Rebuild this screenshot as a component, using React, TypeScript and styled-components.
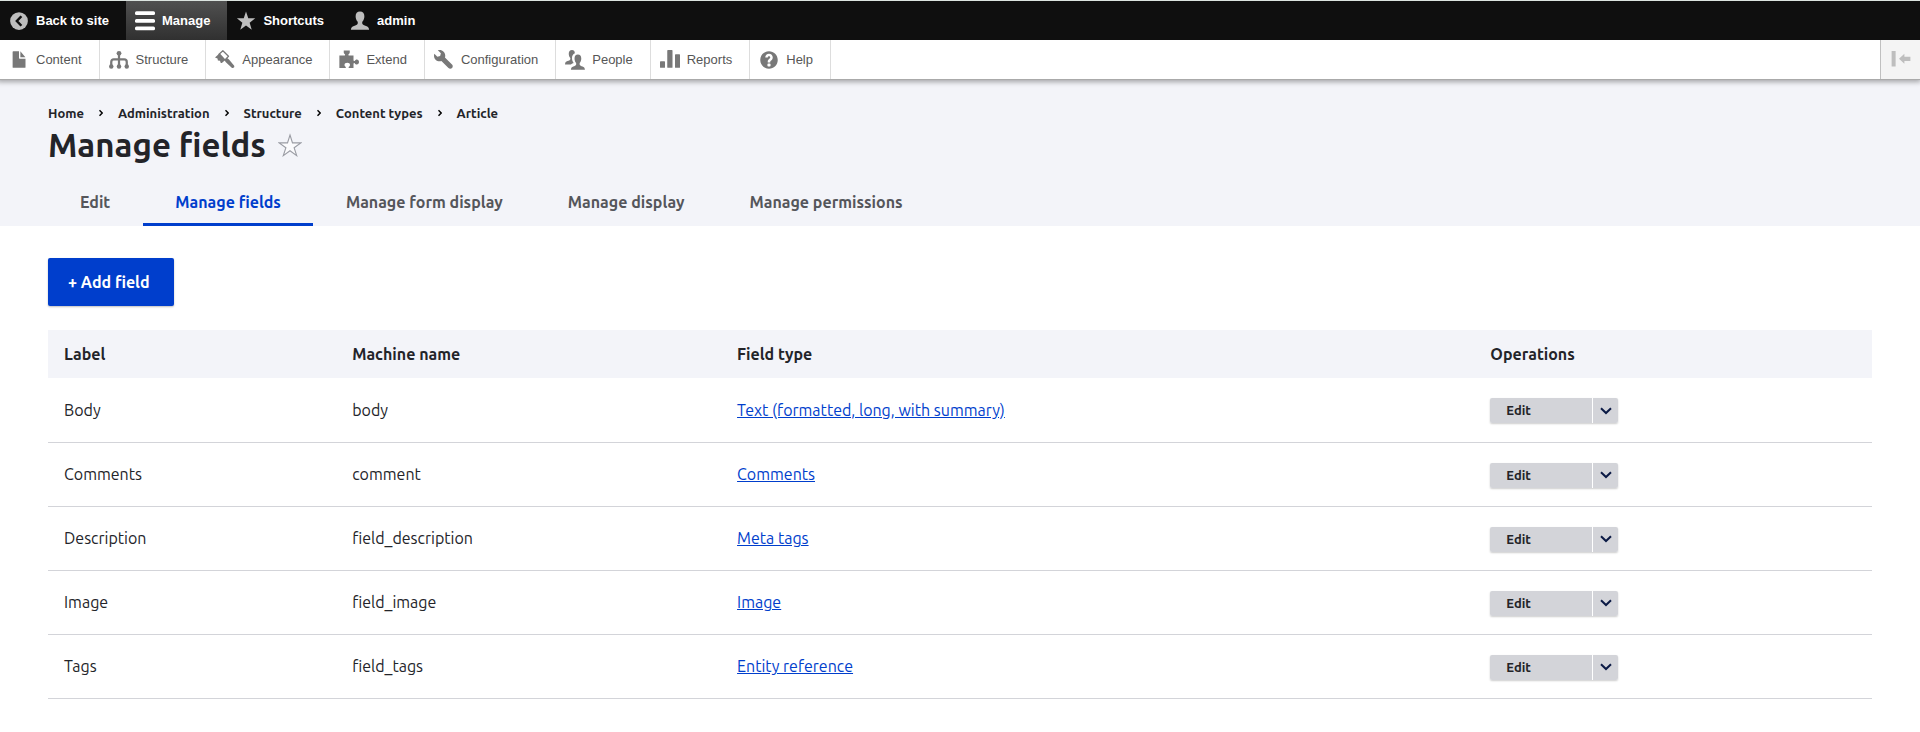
import React from "react";
import styled, { createGlobalStyle, css } from "styled-components";

const uiFont = `Ubuntu, "Noto Sans", sans-serif`;
const toolbarFont = `"Liberation Sans", Arial, sans-serif`;

const GlobalStyle = createGlobalStyle`
  *, *::before, *::after { box-sizing: border-box; }
  body {
    margin: 0;
    background: #fff;
    color: #232429;
    font-family: ${uiFont};
    font-size: 16px;
    line-height: 24px;
  }
`;

/* ---------- toolbar ---------- */

const ToolbarBar = styled.nav`
  display: flex;
  height: 40px;
  border-top: 1px solid #dbe3df;
  background: #0f0f0f;
  font: bold 13px/39px ${toolbarFont};
`;

const itemLayout = css`
  display: flex;
  align-items: center;
  gap: 7px;
  padding: 0 17px 0 9px;
  text-decoration: none;
  white-space: nowrap;
`;

const BarLink = styled.a<{ $active?: boolean }>`
  ${itemLayout}
  color: #fff;
  background: ${(p) => (p.$active ? "linear-gradient(#505050, #303030)" : "transparent")};
  svg { color: ${(p) => (p.$active ? "#fff" : "#bebebe")}; }
`;

const Tray = styled.nav`
  position: relative;
  display: flex;
  height: 40px;
  background: #fff;
  border-bottom: 1px solid #aaa;
  box-shadow: -1px 0 5px 2px rgba(0, 0, 0, 0.33);
  clip-path: inset(0 0 -12px 0);
  font: 13px/39px ${toolbarFont};
`;

const TrayLink = styled.a`
  ${itemLayout}
  color: #565656;
  border-right: 1px solid #ddd;
  svg { color: #787878; }
`;

const OrientationButton = styled.button`
  display: flex;
  align-items: center;
  justify-content: center;
  width: 40px;
  margin-left: auto;
  padding: 0;
  border: 0;
  border-left: 1px solid #c0c0c0;
  background: #f4f4f4;
  color: #bebebe;
`;

const Glyph = styled.svg`
  display: block;
  flex: none;
  width: 20px;
  height: 20px;
  fill: currentColor;
`;

const Icon = ({ children }: { children: React.ReactNode }) => (
  <Glyph viewBox="0 0 16 16" aria-hidden="true">
    {children}
  </Glyph>
);

const personPath =
  "M7.3 0C5 0 3.8 1.5 3.8 3.8c0 1.500.5 3.200 1.500 4.200.3.4.3 1.300.1 1.900-.3.900-1.500 1.300-2.900 1.700C1 12 .2 12.800 0 14.700h14.600c-.2-1.900-1-2.700-2.500-3.100-1.400-.4-2.600-.8-2.900-1.700-.2-.6-.2-1.500.1-1.900 1-1 1.500-2.700 1.500-4.200C10.800 1.500 9.600 0 7.300 0z";

const BackIcon = () => (
  <Icon>
    <circle cx="8" cy="8" r="7.1" />
    <path d="M9.900 4.200 6.300 8l3.600 3.800" fill="none" stroke="#0f0f0f" strokeWidth="2" />
  </Icon>
);
const MenuIcon = () => (
  <Icon>
    <rect y="0.200" width="16" height="3" rx="1.200" />
    <rect y="6.300" width="16" height="3" rx="1.200" />
    <rect y="12.300" width="16" height="3" rx="1.200" />
  </Icon>
);
const StarIcon = () => (
  <Icon>
    <path d="M8 .4l1.800 5.400h5.600l-4.500 3.500 1.700 5.600L8 11.500l-4.600 3.400 1.700-5.600L.7 5.800h5.500z" />
  </Icon>
);
const PersonIcon = () => (
  <Icon>
    <path d={personPath} transform="translate(.7 .3)" />
  </Icon>
);
const FileIcon = () => (
  <Icon>
    <path d="M8 1H3.400a.5.5 0 0 0-.5.5v12.200c0 .3.200.5.500.5h9.300c.3 0 .5-.2.500-.5V7H8.600A.6.600 0 0 1 8 6.400zM9.100 1v4.800h4z" />
  </Icon>
);
const SitemapIcon = () => (
  <Icon>
    <circle cx="8" cy="2.600" r="1.900" />
    <circle cx="1.800" cy="13.200" r="1.800" />
    <circle cx="8" cy="13.200" r="1.800" />
    <circle cx="14.200" cy="13.200" r="1.800" />
    <path d="M8 3v10M1.800 13V9.500c0-1.300.7-2 2-2h8.400c1.300 0 2 .7 2 2V13" fill="none" stroke="currentColor" strokeWidth="1.800" />
  </Icon>
);
const BrushIcon = () => (
  <Icon>
    <path d="M3.200 3.400 6.300.6 10.800 5 7.900 8.100z" fill="none" stroke="currentColor" strokeWidth="1" strokeLinejoin="round" />
    <path d="M3.700 2.500 0 6l2 .7.3 1.600 1.700.3.600 1.800.9-.1L8.400 7.700zM9.400 6.200l1.800 1.300 4 4.800c.4.600.3 1.300-.1 1.700s-1.100.500-1.700.1l-4.700-4.300L7.400 8z" />
  </Icon>
);
const PuzzleIcon = () => (
  <Icon>
    <path d="M.3 4.400h3.900c.7 0 .9-.5.5-1-.5-.4-.9-.8-.9-1.600V.3h4.800v1.500c0 .8-.4 1.200-.9 1.600-.4.500-.2 1 .5 1h3.400v3.700c0 .7.600.8 1.100.4.400-.4.700-.9 1.500-.9 1.100 0 1.800.8 1.800 2s-.7 2-1.800 2c-.8 0-1.100-.5-1.500-.9-.5-.4-1.100-.3-1.100.4v3.300H8.300c-.7 0-.8-.6-.4-1 .5-.4.900-.8.900-1.500 0-1-.8-1.700-2.200-1.700s-2.200.7-2.200 1.700c0 .7.400 1.100.9 1.500.4.400.3 1-.4 1H.3v-3.200V4.400z" />
  </Icon>
);
const WrenchIcon = () => (
  <Icon>
    <path d="M14.416 11.586l-.01-.008v-.001l-5.656-5.656c.15-.449.252-.921.252-1.421 0-2.485-2.016-4.500-4.502-4.500-.505 0-.981.102-1.434.255l2.431 2.431-.588 2.196-2.196.588-2.445-2.445c-.162.464-.268.956-.268 1.475 0 2.486 2.014 4.500 4.500 4.500.5 0 .972-.102 1.421-.251l5.667 5.665c.781.781 2.047.781 2.828 0s.781-2.047 0-2.828z" />
  </Icon>
);
const PeopleIcon = () => (
  <Icon>
    <path d="M5.600 0C3.900 0 3 1.200 3 2.900c0 1.200.4 2.400 1.100 3.200.3.300.200 1 .1 1.400-.3.700-1.100 1-2.200 1.300C.8 9.100.100 9.900 0 11.600h4.700c.6-.6 1.500-.9 2.300-1.200-.9-1.100-1.400-2.500-1.400-4C5.600 4.600 6.300 3.200 7.900 2.500 7.800.9 7 0 5.600 0z" />
    <path d={personPath} transform="translate(4.700 3.600) scale(.77 .83)" />
  </Icon>
);
const ChartIcon = () => (
  <Icon>
    <rect y="9" width="4" height="5.200" rx=".5" />
    <rect x="5.800" y="0" width="4.200" height="14.200" rx=".5" />
    <rect x="12" y="3.300" width="4" height="10.900" rx=".5" />
  </Icon>
);
const HelpIcon = () => (
  <Icon>
    <path d="M8.002 1c-3.868 0-7.002 3.134-7.002 7s3.134 7 7.002 7c3.865 0 7-3.134 7-7s-3.135-7-7-7zm3 5c0 .551-.16 1.085-.477 1.586l-.158.22c-.07.093-.189.241-.361.393-.168.148-.35.299-.545.447l-.203.189-.141.129-.096.17-.021.235v.63h-2.001v-.704c.026-.396.078-.73.204-.999.125-.269.271-.498.439-.688l.225-.21-.01-.015.176-.14.137-.128c.186-.139.357-.277.516-.417l.148-.18c.098-.152.168-.323.168-.518 0-.552-.447-1-1-1s-1.002.448-1.002 1h-2c0-1.657 1.343-3 3.002-3 1.656 0 3 1.343 3 3zm-1.750 6.619c0 .344-.281.625-.625.625h-1.250c-.345 0-.626-.281-.626-.625v-1.238c0-.344.281-.625.626-.625h1.250c.344 0 .625.281.625.625v1.238z" />
  </Icon>
);
const OrientationIcon = () => (
  <Icon>
    <path d="M.5.800h3.200v12.400H.5zM6.400 7 10.700 3v2.400h4.800v3.400h-4.800V11z" />
  </Icon>
);

/* ---------- page header ---------- */

const PageHeader = styled.header`
  padding: 24px 48px 0;
  background: #f3f4f9;
`;

const Breadcrumb = styled.ol`
  display: flex;
  margin: 0;
  padding: 0;
  list-style: none;
  font-size: 13px;
  font-weight: 700;
  line-height: 18px;
  a { color: inherit; text-decoration: none; }
`;

const Crumb = styled.li`
  display: flex;
  align-items: center;
`;

const CrumbChevron = styled.svg`
  width: 4px;
  height: 8px;
  margin: 0 15px;
  fill: none;
  stroke: #000;
  stroke-width: 1.4;
`;

const TitleRow = styled.div`
  display: flex;
  align-items: center;
  gap: 12px;
`;

const Title = styled.h1`
  margin: 0;
  font-size: 33px;
  font-weight: 700;
  line-height: 46px;
`;

const StarButton = styled.button`
  display: flex;
  padding: 0;
  border: 0;
  background: none;
  svg { width: 24px; height: 24px; fill: #fbfbfd; stroke: #9a9ca4; stroke-width: 1.1; }
`;

const Tabs = styled.nav`
  display: flex;
  gap: 1px;
  padding-top: 10px;
`;

const Tab = styled.a<{ $active?: boolean }>`
  padding: 0 32px;
  color: ${(p) => (p.$active ? "#003ecc" : "#55565b")};
  font-weight: 700;
  line-height: 48px;
  text-decoration: none;
  white-space: nowrap;
  box-shadow: ${(p) => (p.$active ? "inset 0 -3px #003ecc" : "none")};
`;

/* ---------- content ---------- */

const Content = styled.main`
  padding: 32px 48px;
`;

const AddLink = styled.a`
  display: inline-block;
  padding: 0 24px 0 20px;
  border-radius: 2px;
  background: #003ecc;
  color: #fff;
  font-weight: 700;
  line-height: 48px;
  text-decoration: none;
  box-shadow: 0 1px 2px rgba(0, 0, 0, 0.25);
`;

const FieldTable = styled.table`
  width: 100%;
  margin-top: 24px;
  border-collapse: collapse;
  table-layout: fixed;
`;

const HeadCell = styled.th<{ $width?: string }>`
  width: ${(p) => p.$width ?? "auto"};
  height: 48px;
  padding: 0 16px;
  background: #f3f4f9;
  text-align: left;
`;

const BodyRow = styled.tr`
  border-bottom: 1px solid #d3d4d9;
`;

const Cell = styled.td`
  height: 64px;
  padding: 0 16px;
`;

const OperationsCell = styled(Cell)`
  padding-top: 2px;
`;

const TypeLink = styled.a`
  color: #003ecc;
`;

const DropButton = styled.div`
  display: flex;
  gap: 1px;
  width: 128px;
  height: 25px;
  border-radius: 2px;
  box-shadow: 0 1px 2px rgba(0, 0, 0, 0.2);
`;

const EditLink = styled.a`
  flex: 1;
  padding: 0 16px;
  border-radius: 2px 0 0 2px;
  background: #d3d4d9;
  color: #232429;
  font-size: 13px;
  font-weight: 700;
  line-height: 25px;
  text-decoration: none;
`;

const ToggleButton = styled.button`
  display: flex;
  align-items: center;
  justify-content: center;
  width: 25px;
  padding: 0;
  border: 0;
  border-radius: 0 2px 2px 0;
  background: #d3d4d9;
  svg { width: 12px; height: 8px; fill: none; stroke: #0b1a45; stroke-width: 2; }
`;

const barItems = [
  { label: "Back to site", icon: <BackIcon /> },
  { label: "Manage", icon: <MenuIcon />, active: true },
  { label: "Shortcuts", icon: <StarIcon /> },
  { label: "admin", icon: <PersonIcon /> },
];

const trayItems = [
  { label: "Content", icon: <FileIcon /> },
  { label: "Structure", icon: <SitemapIcon /> },
  { label: "Appearance", icon: <BrushIcon /> },
  { label: "Extend", icon: <PuzzleIcon /> },
  { label: "Configuration", icon: <WrenchIcon /> },
  { label: "People", icon: <PeopleIcon /> },
  { label: "Reports", icon: <ChartIcon /> },
  { label: "Help", icon: <HelpIcon /> },
];

const crumbs = ["Home", "Administration", "Structure", "Content types", "Article"];
const tabs = ["Edit", "Manage fields", "Manage form display", "Manage display", "Manage permissions"];

const fields = [
  { label: "Body", name: "body", type: "Text (formatted, long, with summary)" },
  { label: "Comments", name: "comment", type: "Comments" },
  { label: "Description", name: "field_description", type: "Meta tags" },
  { label: "Image", name: "field_image", type: "Image" },
  { label: "Tags", name: "field_tags", type: "Entity reference" },
];

export default function App() {
  return (
    <>
      <GlobalStyle />
      <ToolbarBar aria-label="Toolbar">
        {barItems.map((item) => (
          <BarLink key={item.label} href="#" $active={item.active}>
            {item.icon}
            {item.label}
          </BarLink>
        ))}
      </ToolbarBar>
      <Tray aria-label="Administration menu">
        {trayItems.map((item) => (
          <TrayLink key={item.label} href="#">
            {item.icon}
            {item.label}
          </TrayLink>
        ))}
        <OrientationButton type="button" aria-label="Vertical orientation">
          <OrientationIcon />
        </OrientationButton>
      </Tray>

      <PageHeader>
        <nav aria-label="Breadcrumb">
          <Breadcrumb>
            {crumbs.map((crumb, i) => (
              <Crumb key={crumb}>
                {i > 0 && (
                  <CrumbChevron viewBox="0 0 4 8" aria-hidden="true">
                    <path d="M.5 1.200 3.200 4 .5 6.800" />
                  </CrumbChevron>
                )}
                <a href="#">{crumb}</a>
              </Crumb>
            ))}
          </Breadcrumb>
        </nav>
        <TitleRow>
          <Title>Manage fields</Title>
          <StarButton type="button" aria-label="Add to shortcuts">
            <svg viewBox="0 0 24 24" aria-hidden="true">
              <path d="M12 2l2.500 7.900h8.300L16.100 14.700l2.600 7.900L12 17.700l-6.700 4.900 2.600-7.900L1.200 9.900h8.300z" />
            </svg>
          </StarButton>
        </TitleRow>
        <Tabs aria-label="Primary tabs">
          {tabs.map((tab) => (
            <Tab key={tab} href="#" $active={tab === "Manage fields"}>
              {tab}
            </Tab>
          ))}
        </Tabs>
      </PageHeader>

      <Content>
        <AddLink href="#">+ Add field</AddLink>
        <FieldTable>
          <thead>
            <tr>
              <HeadCell scope="col" $width="15.8%">Label</HeadCell>
              <HeadCell scope="col" $width="21.1%">Machine name</HeadCell>
              <HeadCell scope="col" $width="41.3%">Field type</HeadCell>
              <HeadCell scope="col">Operations</HeadCell>
            </tr>
          </thead>
          <tbody>
            {fields.map((field) => (
              <BodyRow key={field.name}>
                <Cell>{field.label}</Cell>
                <Cell>{field.name}</Cell>
                <Cell>
                  <TypeLink href="#">{field.type}</TypeLink>
                </Cell>
                <OperationsCell>
                  <DropButton>
                    <EditLink href="#">Edit</EditLink>
                    <ToggleButton type="button" aria-label={`List additional actions for ${field.label}`}>
                      <svg viewBox="0 0 12 8" aria-hidden="true">
                        <path d="M1 1.200 6 6l5-4.800" />
                      </svg>
                    </ToggleButton>
                  </DropButton>
                </OperationsCell>
              </BodyRow>
            ))}
          </tbody>
        </FieldTable>
      </Content>
    </>
  );
}
